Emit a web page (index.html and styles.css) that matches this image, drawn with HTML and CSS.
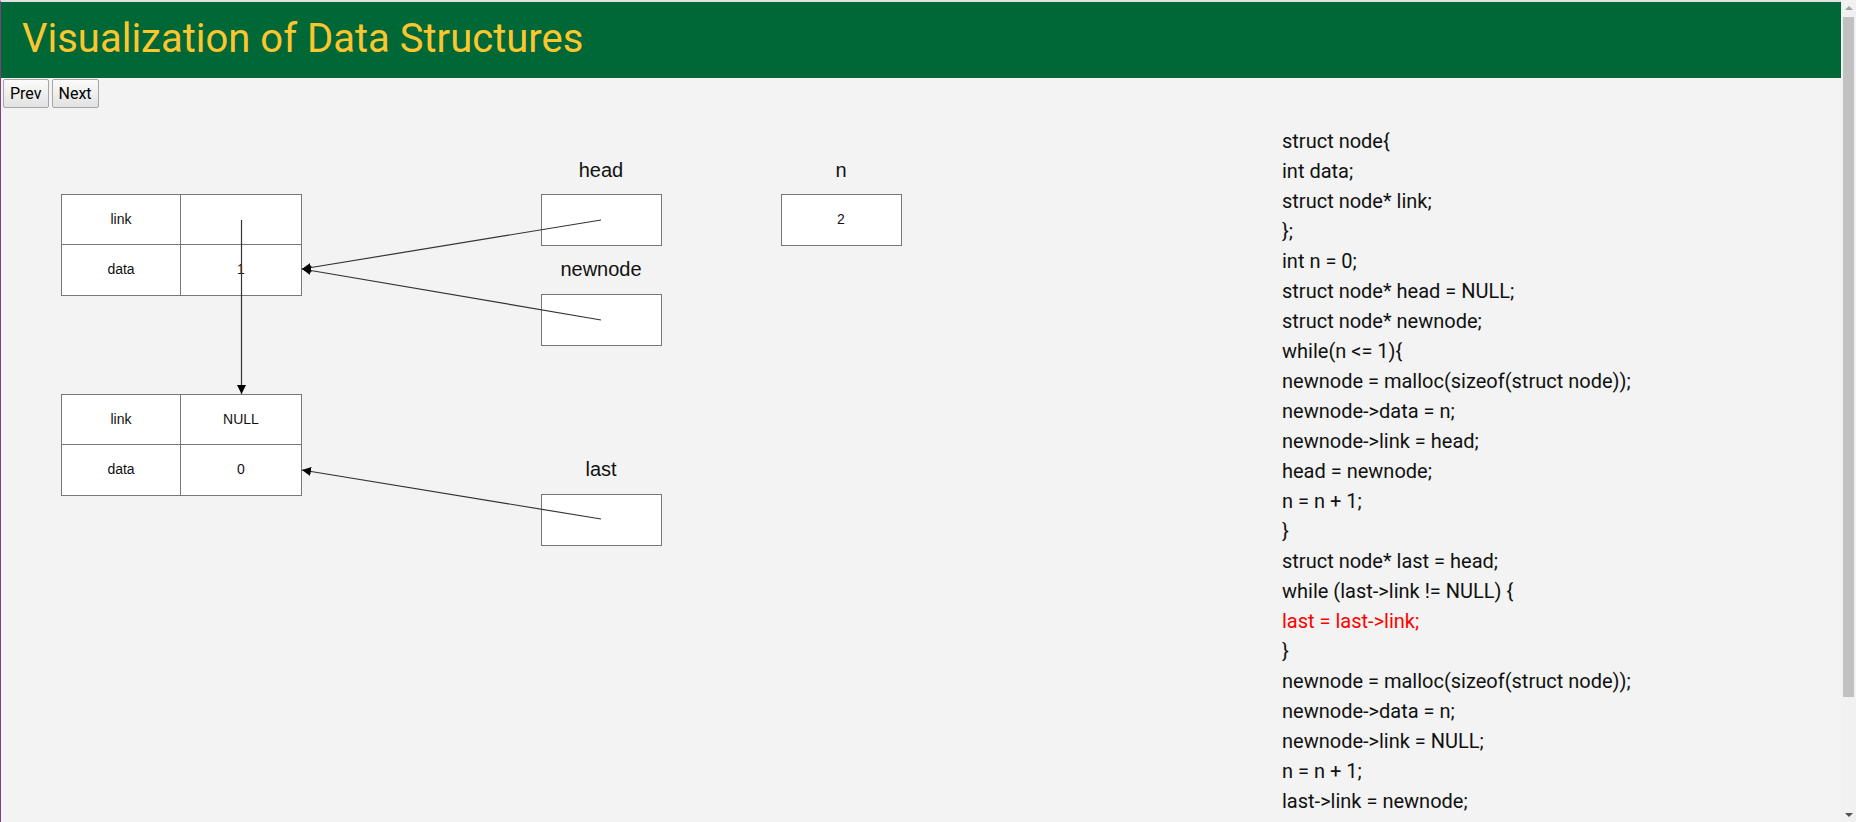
FILE: index.html
```html
<!DOCTYPE html>
<html lang="en">
<head>
<meta charset="utf-8">
<title>Visualization of Data Structures</title>
<link rel="stylesheet" href="styles.css">
</head>
<body>
<header class="topbar">
  <h1 class="title">Visualization of Data Structures</h1>
</header>
<div class="controls">
  <button class="btn">Prev</button>
  <button class="btn">Next</button>
</div>
<main class="stage">
  <svg class="diagram" width="1100" height="460" viewBox="1 110 1100 460" xmlns="http://www.w3.org/2000/svg">
    <defs>
      <marker id="arrow" viewBox="0 0 10 10" refX="10" refY="5" markerWidth="9" markerHeight="9" markerUnits="userSpaceOnUse" orient="auto">
        <path d="M0,0 L10,5 L0,10 z" fill="#000"/>
      </marker>
    </defs>

    <!-- node 1 -->
    <g class="node">
      <rect x="61.5" y="194.5" width="240" height="101" class="box"/>
      <line x1="61.5" y1="244.5" x2="301.5" y2="244.5" class="grid"/>
      <line x1="180.5" y1="194.5" x2="180.5" y2="295.5" class="grid"/>
      <text x="121" y="224" class="cell">link</text>
      <text x="121" y="274" class="cell">data</text>
      <text x="241" y="274" class="cell">1</text>
    </g>

    <!-- node 2 -->
    <g class="node">
      <rect x="61.5" y="394.5" width="240" height="101" class="box"/>
      <line x1="61.5" y1="444.5" x2="301.5" y2="444.5" class="grid"/>
      <line x1="180.5" y1="394.5" x2="180.5" y2="495.5" class="grid"/>
      <text x="121" y="424" class="cell">link</text>
      <text x="241" y="424" class="cell">NULL</text>
      <text x="121" y="474" class="cell">data</text>
      <text x="241" y="474" class="cell">0</text>
    </g>

    <!-- pointer variables -->
    <text x="601" y="177" class="label">head</text>
    <rect x="541.5" y="194.5" width="120" height="51" class="box"/>

    <text x="601" y="276" class="label">newnode</text>
    <rect x="541.5" y="294.5" width="120" height="51" class="box"/>

    <text x="601" y="476" class="label">last</text>
    <rect x="541.5" y="494.5" width="120" height="51" class="box"/>

    <text x="841" y="177" class="label">n</text>
    <rect x="781.5" y="194.5" width="120" height="51" class="box"/>
    <text x="841" y="224" class="cell">2</text>

    <!-- links -->
    <line x1="241.5" y1="220" x2="241.5" y2="394" class="link" marker-end="url(#arrow)"/>
    <line x1="601" y1="220" x2="302" y2="269" class="link" marker-end="url(#arrow)"/>
    <line x1="601" y1="320" x2="302" y2="269" class="link" marker-end="url(#arrow)"/>
    <line x1="601" y1="519" x2="302" y2="470" class="link" marker-end="url(#arrow)"/>
  </svg>

  <div class="code">
    <div class="line">struct node{</div>
    <div class="line">int data;</div>
    <div class="line">struct node* link;</div>
    <div class="line">};</div>
    <div class="line">int n = 0;</div>
    <div class="line">struct node* head = NULL;</div>
    <div class="line">struct node* newnode;</div>
    <div class="line">while(n &lt;= 1){</div>
    <div class="line">newnode = malloc(sizeof(struct node));</div>
    <div class="line">newnode-&gt;data = n;</div>
    <div class="line">newnode-&gt;link = head;</div>
    <div class="line">head = newnode;</div>
    <div class="line">n = n + 1;</div>
    <div class="line">}</div>
    <div class="line">struct node* last = head;</div>
    <div class="line">while (last-&gt;link != NULL) {</div>
    <div class="line current">last = last-&gt;link;</div>
    <div class="line">}</div>
    <div class="line">newnode = malloc(sizeof(struct node));</div>
    <div class="line">newnode-&gt;data = n;</div>
    <div class="line">newnode-&gt;link = NULL;</div>
    <div class="line">n = n + 1;</div>
    <div class="line">last-&gt;link = newnode;</div>
  </div>
</main>

<div class="scrollbar" aria-hidden="true">
  <span class="scroll-arrow up"></span>
  <span class="scroll-track"><span class="scroll-thumb"></span></span>
  <span class="scroll-arrow down"></span>
</div>
</body>
</html>
```

FILE: styles.css
```css
html {
  background: #f2f3f2;
}

body {
  margin: 0 15px 0 0;
  border-left: 1px solid #7e3f7e;
  border-top: 2px solid #e2e2e2;
  background: #f2f3f2;
  font-family: Roboto, "Liberation Sans", sans-serif;
  color: #111;
}

.topbar {
  height: 76px;
  background: #006837;
  display: flex;
  align-items: center;
  padding-left: 21px;
}

.title {
  margin: 0;
  font-family: Roboto, "Liberation Sans", sans-serif;
  font-weight: 400;
  font-size: 40px;
  line-height: 46px;
  color: #fcc62e;
  position: relative;
  top: -1px;
}

.controls {
  display: flex;
  gap: 3px;
  padding: 1px 0 0 2px;
  height: 31px;
}

.btn {
  height: 29px;
  padding: 0 6px;
  border: 1px solid #a6a6a6;
  border-radius: 2px;
  background: linear-gradient(#fbfbfb, #e2e2e2);
  font-family: Roboto, "Liberation Sans", sans-serif;
  font-size: 16px;
  color: #000;
}

.stage {
  display: flex;
  align-items: flex-start;
  padding-bottom: 124px;
}

.diagram {
  flex: none;
  display: block;
}

.box {
  fill: #fff;
  stroke: #777;
  stroke-width: 1;
}

.grid {
  stroke: #777;
  stroke-width: 1;
}

.link {
  stroke: #333;
  stroke-width: 1.2;
}

.cell {
  font-family: "Liberation Sans", Arial, sans-serif;
  font-size: 14px;
  text-anchor: middle;
  fill: #111;
}

.label {
  font-family: "Liberation Sans", Arial, sans-serif;
  font-size: 20px;
  text-anchor: middle;
  fill: #111;
}

.code {
  margin-left: 181px;
  padding-top: 16px;
  font-family: Roboto, "Liberation Sans", sans-serif;
  font-size: 20px;
  line-height: 30px;
  color: #111;
  white-space: nowrap;
}

.line.current {
  color: #ff0000;
}

/* browser-style vertical scrollbar drawn over the right edge */
.scrollbar {
  position: fixed;
  top: 0;
  right: 0;
  bottom: 0;
  width: 15px;
  background: #f1f1f1;
  display: flex;
  flex-direction: column;
  align-items: center;
}

.scroll-arrow {
  flex: none;
  height: 15px;
  width: 15px;
  display: flex;
  align-items: center;
  justify-content: center;
}

.scroll-arrow::before {
  content: "";
  border-left: 4px solid transparent;
  border-right: 4px solid transparent;
}

.scroll-arrow.up::before {
  border-bottom: 4px solid #a3a3a3;
}

.scroll-arrow.down::before {
  border-top: 4px solid #505050;
}

.scroll-track {
  flex: 1;
  width: 15px;
  display: flex;
  justify-content: center;
  padding-top: 2px;
}

.scroll-thumb {
  width: 11px;
  height: 680px;
  background: #c1c1c1;
}
```
